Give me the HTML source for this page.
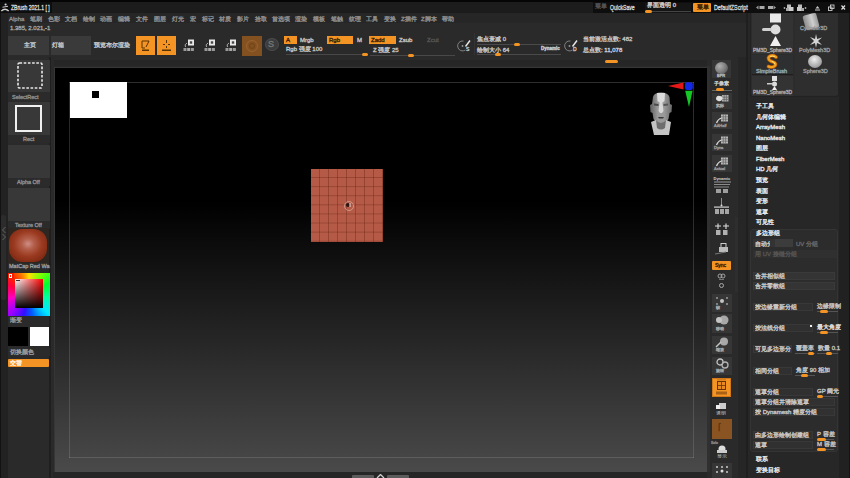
<!DOCTYPE html>
<html><head><meta charset="utf-8">
<style>
*{margin:0;padding:0;box-sizing:border-box}
html,body{width:850px;height:478px;overflow:hidden;background:#2a2a2a;font-family:"Liberation Sans",sans-serif;color:#c8c8c8}
.a{position:absolute}
svg{display:block}
.t{position:absolute;font-size:6px;line-height:7px;white-space:nowrap;color:#c4c4c4;-webkit-text-stroke:0.35px currentColor}
.btn{position:absolute;background:#3a3a3a}
.or{position:absolute;background:#f39424;color:#3a2000}
.sl{position:absolute;height:1px;background:#5a5a5a}
.hd{position:absolute;width:6px;height:3px;border-radius:1.5px;background:#f39424}
#title{left:0;top:0;width:850px;height:13px;background:#0e0e0e}
#vp{left:55px;top:68px;width:652px;height:404px;background:linear-gradient(#000 0%,#000 33%,#4a4a4a 100%)}
.fr{position:absolute;background:rgba(255,255,255,0.13)}
</style></head><body>
<!-- title bar -->
<div class="a" style="left:0;top:13px;width:850px;height:10px;background:#262626"></div>
<div class="a" id="title"></div>
<div class="a" style="left:52px;top:2px;width:541px;height:11px;background:#1c1c1c"></div>
<div class="a" style="left:0;top:0;width:850px;height:2px;background:#050505"></div>

<!-- title text -->
<svg class="a" style="left:0;top:0" width="11" height="13" viewBox="0 0 11 13"><ellipse cx="5.6" cy="4.6" rx="1.1" ry="1" fill="#cfcfcf"/><path d="M2.5 7.2 L8 6.2" stroke="#c8c8c8" stroke-width="1.1"/><path d="M1.3 11 Q5 7.5 8.7 11" stroke="#d0d0d0" stroke-width="1.3" fill="none"/></svg>
<div class="t" style="left:11px;top:3.5px;color:#dadada;font-size:7px;transform:scaleX(.72);transform-origin:0 0">ZBrush 2021.1 [ ]</div>
<div class="t" style="left:595px;top:3px;color:#555">菜单</div>
<div class="t" style="left:610px;top:4px;color:#d4d4d4;font-size:7px;transform:scaleX(.73);transform-origin:0 0">QuickSave</div>
<div class="a" style="left:645px;top:3px;width:46px;height:10px;background:#151515"></div>
<div class="t" style="left:647px;top:2px;color:#c8c8c8">界面透明 0</div>
<div class="sl" style="left:645px;top:11px;width:46px;background:#444"></div>
<div class="hd" style="left:645px;top:10px;width:7px"></div>
<div class="or" style="left:693px;top:3px;width:18px;height:9px;border-radius:1px"></div>
<div class="t" style="left:697px;top:4px;color:#3a2000">菜单</div>
<div class="t" style="left:714px;top:4px;color:#d4d4d4;font-size:7px;transform:scaleX(.76);transform-origin:0 0">DefaultZScript</div>
<svg class="a" style="left:750px;top:2px" width="100" height="11" viewBox="0 0 100 11">
<path d="M6 5.5 L8.5 3.5 L8.5 7.5 Z" fill="#999"/><rect x="9.5" y="4" width="5" height="3" fill="#aaa"/>
<rect x="18" y="4" width="5" height="3" fill="#aaa"/><path d="M26 5.5 L23.5 3.5 L23.5 7.5 Z" fill="#999"/>
<circle cx="34.5" cy="6" r="0.9" fill="#aaa"/><rect x="37" y="2.5" width="4" height="3.5" fill="#bbb"/><rect x="39" y="5" width="4.5" height="4" fill="#ccc"/><rect x="36" y="6" width="3" height="3" fill="#aaa"/>
<rect x="48" y="2.5" width="4" height="3.5" fill="#bbb"/><rect x="47" y="5" width="4.5" height="4" fill="#ccc"/><rect x="51" y="6" width="3" height="3" fill="#aaa"/><circle cx="55.5" cy="6" r="0.9" fill="#aaa"/>
<path d="M67.5 4 L69.5 6.5 L65.5 6.5 Z" fill="#ccc"/><rect x="65" y="7.5" width="5" height="1" fill="#ccc"/>
<rect x="78.5" y="5" width="3.5" height="3.5" fill="none" stroke="#ccc" stroke-width="0.9"/><rect x="80.5" y="3" width="3.5" height="3.5" fill="none" stroke="#ccc" stroke-width="0.9"/>
<path d="M91.5 3.5 L95 7.5 M95 3.5 L91.5 7.5" stroke="#ddd" stroke-width="1.2"/>
</svg>
<!-- menu bar -->
<div class="t" style="left:9px;top:15.5px;color:#8e8e8e">Alpha</div>
<div class="t" style="left:30px;top:15.5px;color:#8e8e8e">笔刷</div>
<div class="t" style="left:48px;top:15.5px;color:#8e8e8e">色彩</div>
<div class="t" style="left:65px;top:15.5px;color:#8e8e8e">文档</div>
<div class="t" style="left:83px;top:15.5px;color:#8e8e8e">绘制</div>
<div class="t" style="left:100px;top:15.5px;color:#8e8e8e">动画</div>
<div class="t" style="left:118px;top:15.5px;color:#8e8e8e">编辑</div>
<div class="t" style="left:136px;top:15.5px;color:#8e8e8e">文件</div>
<div class="t" style="left:154px;top:15.5px;color:#8e8e8e">图层</div>
<div class="t" style="left:172px;top:15.5px;color:#8e8e8e">灯光</div>
<div class="t" style="left:190px;top:15.5px;color:#8e8e8e">宏</div>
<div class="t" style="left:202px;top:15.5px;color:#8e8e8e">标记</div>
<div class="t" style="left:219px;top:15.5px;color:#8e8e8e">材质</div>
<div class="t" style="left:237px;top:15.5px;color:#8e8e8e">影片</div>
<div class="t" style="left:255px;top:15.5px;color:#8e8e8e">拾取</div>
<div class="t" style="left:272px;top:15.5px;color:#8e8e8e">首选项</div>
<div class="t" style="left:295px;top:15.5px;color:#8e8e8e">渲染</div>
<div class="t" style="left:313px;top:15.5px;color:#8e8e8e">模板</div>
<div class="t" style="left:331px;top:15.5px;color:#8e8e8e">笔触</div>
<div class="t" style="left:349px;top:15.5px;color:#8e8e8e">纹理</div>
<div class="t" style="left:366px;top:15.5px;color:#8e8e8e">工具</div>
<div class="t" style="left:384px;top:15.5px;color:#8e8e8e">变换</div>
<div class="t" style="left:401px;top:15.5px;color:#8e8e8e">Z插件</div>
<div class="t" style="left:421px;top:15.5px;color:#8e8e8e">Z脚本</div>
<div class="t" style="left:442px;top:15.5px;color:#8e8e8e">帮助</div>
<div class="t" style="left:10px;top:25px;color:#a4a4a4">1.385, 2.021,-1</div>

<!-- toolbar -->
<div class="btn" style="left:8px;top:36px;width:41px;height:19px"></div>
<div class="t" style="left:24px;top:42px">主页</div>
<div class="btn" style="left:51px;top:36px;width:40px;height:19px"></div>
<div class="t" style="left:52px;top:42px">灯箱</div>
<div class="t" style="left:94px;top:42px">预览布尔渲染</div>
<div class="or" style="left:136px;top:36px;width:19px;height:19px"></div>
<div class="or" style="left:157px;top:36px;width:19px;height:19px"></div>
<div class="a" style="left:137px;top:37px"><svg width="17" height="17" viewBox="0 0 17 17"><path d="M5 4 L12 4 M5 4 L5 11 L8 11 M12 4 L9 10" stroke="#5a3300" stroke-width="1" fill="none"/><rect x="5" y="12.5" width="7" height="1.5" fill="#5a3300"/></svg></div>
<div class="a" style="left:158px;top:37px"><svg width="17" height="17" viewBox="0 0 17 17"><path d="M8.5 3 L8.5 6 M8.5 9 L8.5 11 M5 7.5 L7 7.5 M10 7.5 L12 7.5" stroke="#5a3300" stroke-width="1" fill="none"/><rect x="4" y="12.5" width="9" height="1.5" fill="#5a3300"/></svg></div>
<div class="a" style="left:182px;top:38px"><svg width="14" height="14" viewBox="0 0 14 14"><rect x="6" y="1.5" width="6" height="6" fill="#e8e8e8"/><rect x="7.8" y="3.3" width="2.4" height="2.4" fill="#444"/><path d="M5 5 Q2 6.5 3.5 9" stroke="#aaa" stroke-width="1" fill="none"/><rect x="1.5" y="10" width="3" height="3" fill="#999"/><rect x="5.2" y="10" width="3" height="3" fill="#aaa"/><rect x="8.9" y="10" width="3" height="3" fill="#999"/></svg></div>
<div class="a" style="left:203px;top:38px"><svg width="14" height="14" viewBox="0 0 14 14"><rect x="6" y="1.5" width="6" height="6" fill="#e8e8e8"/><rect x="7.8" y="3.3" width="2.4" height="2.4" fill="#444"/><path d="M5 5 Q2 6.5 3.5 9" stroke="#aaa" stroke-width="1" fill="none"/><rect x="1.5" y="10" width="3" height="3" fill="#999"/><rect x="5.2" y="10" width="3" height="3" fill="#aaa"/><rect x="8.9" y="10" width="3" height="3" fill="#999"/></svg></div>
<div class="a" style="left:224px;top:38px"><svg width="14" height="14" viewBox="0 0 14 14"><rect x="6" y="1.5" width="6" height="6" fill="#e8e8e8"/><rect x="7.8" y="3.3" width="2.4" height="2.4" fill="#444"/><path d="M5 5 Q2 6.5 3.5 9" stroke="#aaa" stroke-width="1" fill="none"/><rect x="1.5" y="10" width="3" height="3" fill="#999"/><rect x="5.2" y="10" width="3" height="3" fill="#aaa"/><rect x="8.9" y="10" width="3" height="3" fill="#999"/></svg></div>
<div class="a" style="left:242px;top:36px;width:20px;height:20px;background:#83511f"></div>
<div class="a" style="left:246px;top:40px;width:12px;height:12px;border-radius:50%;border:1.5px solid #9a6430"></div><div class="a" style="left:249px;top:43px;width:6px;height:6px;border-radius:50%;border:1px solid #72441a"></div>
<div class="a" style="left:265px;top:38px;width:14px;height:13px;border-radius:50%;background:#3c3c3c;border:1px solid #4c4c4c"></div>
<div class="t" style="left:268px;top:40px;color:#777;font-size:9px;line-height:9px">S</div>
<div class="or" style="left:284px;top:36px;width:13px;height:8px"></div>
<div class="t" style="left:286px;top:37px;color:#3a2000">A</div>
<div class="t" style="left:300px;top:37px">Mrgb</div>
<div class="or" style="left:327px;top:36px;width:26px;height:8px"></div>
<div class="t" style="left:329px;top:37px;color:#3a2000">Rgb</div>
<div class="t" style="left:357px;top:37px">M</div>
<div class="or" style="left:369px;top:36px;width:27px;height:8px"></div>
<div class="t" style="left:371px;top:37px;color:#3a2000">Zadd</div>
<div class="t" style="left:399px;top:37px">Zsub</div>
<div class="t" style="left:427px;top:37px;color:#555">Zcut</div>
<div class="t" style="left:286px;top:46px">Rgb 强度 100</div>
<div class="sl" style="left:286px;top:54px;width:82px;background:#484848"></div>
<div class="hd" style="left:362px;top:53px"></div>
<div class="t" style="left:373px;top:47px">Z 强度 25</div>
<div class="sl" style="left:370px;top:55px;width:85px;background:#484848"></div>
<div class="hd" style="left:408px;top:54px"></div>
<!-- brush icons -->
<div class="a" style="left:456px;top:38px"><svg width="16" height="15" viewBox="0 0 16 15"><path d="M7.5 3 A5 5 0 1 0 9.5 12" stroke="#888" stroke-width="0.9" fill="none"/><path d="M9.5 8.5 L14 2.5" stroke="#e8e8e8" stroke-width="1.4"/><circle cx="6.5" cy="8" r="0.9" fill="#999"/></svg></div>
<div class="t" style="left:466px;top:46px;font-size:5px">S</div>
<div class="t" style="left:477px;top:36px">焦点衰减 0</div>
<div class="sl" style="left:477px;top:44px;width:84px;background:#4a4a4a"></div>
<div class="hd" style="left:514px;top:43px"></div>
<div class="t" style="left:477px;top:47px">绘制大小 64</div>
<div class="sl" style="left:477px;top:54px;width:84px;background:#4a4a4a"></div><div class="a" style="left:474px;top:33px;width:1px;height:22px;background:#333"></div>
<div class="hd" style="left:495px;top:53px"></div>
<div class="t" style="left:541px;top:45px;font-size:4.5px;color:#ccc;font-weight:bold">Dynamic</div>
<div class="a" style="left:563px;top:38px"><svg width="16" height="15" viewBox="0 0 16 15"><path d="M7.5 3 A5 5 0 1 0 9.5 12" stroke="#888" stroke-width="0.9" fill="none"/><path d="M9.5 8.5 L14 2.5" stroke="#e8e8e8" stroke-width="1.4"/><circle cx="6.5" cy="8" r="0.9" fill="#999"/></svg></div>
<div class="t" style="left:573px;top:46px;font-size:5px">D</div>
<div class="t" style="left:583px;top:36px">当前激活点数: 482</div>
<div class="t" style="left:583px;top:47px">总点数: <span style="color:#c8d0e0">11,078</span></div>
<!-- left dark strip --><!--LP-->
<div class="a" style="left:0;top:13px;width:8px;height:465px;background:#222"></div><div class="a" style="left:0;top:13px;width:1px;height:465px;background:#121212"></div>
<!-- toolbar bottom darker band -->
<div class="a" style="left:50px;top:60px;width:700px;height:6px;background:#262626"></div>
<div class="a" style="left:50px;top:57px;width:4px;height:421px;background:#2a2a2a"></div><div class="a" style="left:49px;top:57px;width:2px;height:421px;background:#1f1f1f"></div>

<!-- left panel -->
<div class="btn" style="left:8px;top:60px;width:42px;height:41px;background:#383838"></div>
<div class="a" style="left:8px;top:92px;width:42px;height:9px;background:#2b2b2b"></div>
<svg class="a" style="left:17px;top:62px" width="26" height="27" viewBox="0 0 26 27"><rect x="1" y="1" width="24" height="25" rx="1.5" fill="none" stroke="#e8e8e8" stroke-width="1.6" stroke-dasharray="2.6 1.6"/></svg>
<div class="t" style="left:12px;top:94px;font-size:5.5px;color:#8e8e8e">SelectRect</div>
<div class="btn" style="left:8px;top:102px;width:42px;height:41px;background:#383838"></div>
<div class="a" style="left:8px;top:135px;width:42px;height:8px;background:#2b2b2b"></div>
<div class="a" style="left:15px;top:105px;width:27px;height:27px;border:2px solid #f0f0f0"></div>
<div class="t" style="left:23px;top:136px;font-size:5.5px;color:#8e8e8e">Rect</div>
<div class="btn" style="left:8px;top:145px;width:42px;height:41px;background:#383838"></div>
<div class="a" style="left:8px;top:178px;width:42px;height:8px;background:#2b2b2b"></div>
<div class="t" style="left:17px;top:179px;font-size:5.5px;color:#8e8e8e">Alpha Off</div>
<div class="btn" style="left:8px;top:188px;width:42px;height:41px;background:#383838"></div>
<div class="a" style="left:8px;top:221px;width:42px;height:8px;background:#2b2b2b"></div>
<div class="t" style="left:15px;top:222px;font-size:5.5px;color:#8e8e8e">Texture Off</div>
<div class="a" style="left:8px;top:228px;width:41px;height:35px;background:#2e2620"></div>
<div class="a" style="left:9px;top:229px;width:38px;height:33px;border-radius:36%/40%;background:radial-gradient(ellipse 62% 64% at 50% 45%,#d08e86 0%,#b4604c 25%,#9a3a20 60%,#7c2610 100%)"></div>
<div class="t" style="left:9px;top:263px;font-size:5.5px;color:#9a9a9a">MatCap Red Wa</div>
<div class="a" style="left:8px;top:273px;width:42px;height:43px;background:conic-gradient(from 0deg at 50% 50%,#ffe000 0deg,#80ff00 30deg,#00ff30 60deg,#00ffa0 100deg,#00e8ff 135deg,#0060ff 170deg,#3010ff 195deg,#a000ff 225deg,#ff00c0 260deg,#ff0040 295deg,#ff2000 315deg,#ff8000 340deg,#ffe000 360deg)"></div>
<div class="a" style="left:15px;top:279px;width:28px;height:29px;background:linear-gradient(to bottom,rgba(0,0,0,0) 0%,#000 100%),linear-gradient(to right,#fff 0%,#ff0000 100%)"></div>
<div class="a" style="left:8px;top:273px;width:6px;height:6px;background:#ff1a00"></div>
<div class="a" style="left:9px;top:274px;width:3px;height:4px;border:1px solid #fff"></div>
<div class="a" style="left:16px;top:280px;width:4px;height:1px;background:#333"></div>
<div class="t" style="left:10px;top:317px;font-size:5.5px;color:#9a9a9a">渐变</div>
<div class="a" style="left:8px;top:327px;width:20px;height:19px;background:#000"></div>
<div class="a" style="left:30px;top:327px;width:19px;height:19px;background:#fff"></div>
<div class="a" style="left:8px;top:348px;width:42px;height:8px;background:#2b2b2b"></div>
<div class="t" style="left:10px;top:349px;font-size:5.5px;color:#9a9a9a">切换颜色</div>
<div class="or" style="left:8px;top:359px;width:41px;height:8px;border-radius:1px"></div>
<div class="t" style="left:10px;top:360px;font-size:5.5px;color:#fff0e0">交替</div>
<div class="a" style="left:1px;top:215px;width:5px;height:85px;background:#2c2c2c;border-radius:2px"></div>
<svg class="a" style="left:1px;top:226px" width="6" height="14" viewBox="0 0 6 14"><path d="M4.5 1 L1.5 4 L4.5 7 M1.5 8 L4.5 11 L1.5 14" stroke="#6a6a6a" stroke-width="0.9" fill="none"/></svg>
<!-- viewport -->
<div class="a" style="left:54px;top:67px;width:653px;height:405px;background:#363636"></div>
<div class="a" id="vp"></div>
<div class="a" style="left:69px;top:82px;width:625px;height:1px;background:rgba(255,255,255,0.18)"></div>
<div class="a" style="left:69px;top:82px;width:1px;height:376px;background:linear-gradient(rgba(255,255,255,0.16),rgba(255,255,255,0.12))"></div>
<div class="a" style="left:693px;top:82px;width:1px;height:376px;background:linear-gradient(rgba(255,255,255,0.18),rgba(255,255,255,0.12))"></div>
<div class="fr" style="left:69px;top:457px;width:625px;height:1px"></div>
<div class="a" style="left:53px;top:472px;width:654px;height:6px;background:#262626"></div>

<!-- right toolbar -->
<div class="a" style="left:707px;top:57px;width:39px;height:421px;background:#2a2a2a"></div>
<div class="a" style="left:707px;top:66px;width:3px;height:406px;background:#303030"></div>
<div class="a" style="left:738px;top:57px;width:8px;height:421px;background:#262626"></div>
<div class="a" style="left:735px;top:217px;width:3px;height:75px;background:#2e2e2e"></div>
<div class="a" style="left:712px;top:60px;width:19px;height:18px;background:#363636"><div class="a" style="left:3px;top:2px;width:13px;height:12px;border-radius:50%;background:radial-gradient(circle at 35% 35%,#b0b0b0,#7a7a7a 55%,#3c3c3c)"></div><div class="t" style="left:5px;top:13px;font-size:4px;line-height:5px;color:#bbb">BPR</div></div>
<div class="t" style="left:714px;top:80px;font-size:5px;color:#ccc">子像素</div>
<div class="sl" style="left:712px;top:90px;width:20px;background:#666"></div>
<div class="hd" style="left:716px;top:88px;width:8px"></div>
<div class="a" style="left:712px;top:93px;width:20px;height:16px;background:#363636"><svg class="a" style="left:3px;top:1px" width="14" height="9" viewBox="0 0 14 9"><rect x="7" y="1" width="6.5" height="6.5" fill="#b0b0b0"/><path d="M9.2 1 V7.5 M11.4 1 V7.5 M7 3.2 H13.5 M7 5.4 H13.5" stroke="#555" stroke-width="0.6"/><path d="M1 4 Q2 1 5 2 Q8 2 7.5 5 Q6 8 3 7 Q0.5 6 1 4Z" fill="#e0e0e0"/></svg><div class="t" style="left:4px;top:10px;font-size:4px;line-height:5px;color:#aaa">实际</div></div>
<div class="a" style="left:712px;top:112px;width:20px;height:17px;background:#363636"><svg class="a" style="left:3px;top:2px" width="14" height="10" viewBox="0 0 14 10"><rect x="6" y="0.5" width="7" height="7" fill="#b8b8b8"/><path d="M8.3 0.5 V7.5 M10.6 0.5 V7.5 M6 2.8 H13 M6 5.2 H13" stroke="#5a5a5a" stroke-width="0.6"/><path d="M1.5 9 Q3 5 6.5 4" stroke="#d8d8d8" stroke-width="1.3" fill="none"/></svg><div class="t" style="left:2px;top:11px;font-size:4px;line-height:5px;color:#9a9a9a">AAHalf</div></div>
<div class="a" style="left:712px;top:134px;width:20px;height:17px;background:#363636"><svg class="a" style="left:3px;top:2px" width="14" height="10" viewBox="0 0 14 10"><rect x="6" y="0.5" width="7" height="7" fill="#b8b8b8"/><path d="M8.3 0.5 V7.5 M10.6 0.5 V7.5 M6 2.8 H13 M6 5.2 H13" stroke="#5a5a5a" stroke-width="0.6"/><path d="M1.5 9 Q3 5 6.5 4" stroke="#d8d8d8" stroke-width="1.3" fill="none"/></svg><div class="t" style="left:2px;top:11px;font-size:4px;line-height:5px;color:#9a9a9a">Dyna</div></div>
<div class="a" style="left:712px;top:155px;width:20px;height:17px;background:#363636"><svg class="a" style="left:3px;top:2px" width="14" height="10" viewBox="0 0 14 10"><rect x="6" y="0.5" width="7" height="7" fill="#b8b8b8"/><path d="M8.3 0.5 V7.5 M10.6 0.5 V7.5 M6 2.8 H13 M6 5.2 H13" stroke="#5a5a5a" stroke-width="0.6"/><path d="M1.5 9 Q3 5 6.5 4" stroke="#d8d8d8" stroke-width="1.3" fill="none"/></svg><div class="t" style="left:2px;top:11px;font-size:4px;line-height:5px;color:#9a9a9a">Actual</div></div>
<svg class="a" style="left:713px;top:176px" width="20" height="18" viewBox="0 0 20 18"><text x="0.5" y="4" font-size="4" font-weight="bold" fill="#d8d8d8" font-family="Liberation Sans">Dynamic</text><rect x="1" y="5.5" width="17" height="1" fill="#9a9a9a"/><rect x="1" y="8" width="16" height="1" fill="#8a8a8a"/><rect x="1" y="10.5" width="15" height="1" fill="#8a8a8a"/><rect x="3" y="13" width="5" height="4" fill="#bbb" opacity="0.8"/><rect x="10" y="13" width="5" height="4" fill="#bbb" opacity="0.8"/></svg>
<svg class="a" style="left:713px;top:196px" width="18" height="19" viewBox="0 0 18 19"><path d="M8.5 2 L8.5 10" stroke="#aaa" stroke-width="0.8"/><circle cx="8.5" cy="9.5" r="1" fill="#ddd"/><rect x="1" y="10.5" width="15" height="1.2" fill="#d0d0d0"/><rect x="2" y="13" width="4" height="5" fill="#bbb" opacity="0.85"/><rect x="7" y="13" width="4" height="5" fill="#bbb" opacity="0.85"/><rect x="12" y="13" width="4" height="5" fill="#bbb" opacity="0.85"/></svg>
<svg class="a" style="left:713px;top:223px" width="18" height="13" viewBox="0 0 18 13"><path d="M2 3 L8 3 M5 0.5 L5 6 M10 3 L16 3 M13 0.5 L13 6" stroke="#ddd" stroke-width="1.1"/><rect x="3" y="7" width="4.5" height="5" fill="#c8c8c8" opacity="0.85"/><rect x="10" y="7" width="4.5" height="5" fill="#c8c8c8" opacity="0.85"/></svg>
<div class="a" style="left:714px;top:243px"><svg width="16" height="12" viewBox="0 0 16 12"><rect x="7" y="0.5" width="5" height="4" fill="none" stroke="#ccc"/><rect x="5" y="4" width="9" height="5" fill="#bbb"/><path d="M1 11 L12 9" stroke="#777"/></svg></div>
<div class="or" style="left:712px;top:261px;width:19px;height:9px;border-radius:1px"></div><div class="t" style="left:715px;top:262px;font-size:5px;color:#3a2000">Sync</div>
<svg class="a" style="left:717px;top:273px" width="9" height="7" viewBox="0 0 9 7"><circle cx="3" cy="3" r="2" fill="none" stroke="#aaa" stroke-width="0.9"/><circle cx="6" cy="3" r="2" fill="none" stroke="#aaa" stroke-width="0.9"/><path d="M2 6.5 L7 6.5" stroke="#888" stroke-width="0.8"/></svg>
<div class="a" style="left:719px;top:283px;width:5px;height:5px;border-radius:50%;border:1px solid #aaa"></div>
<div class="a" style="left:712px;top:294px;width:20px;height:18px;background:#363636"><svg class="a" style="left:3px;top:2px" width="14" height="10" viewBox="0 0 14 10"><circle cx="7" cy="5" r="2" fill="#c4c4c4"/><circle cx="2" cy="2" r="1" fill="#9a9a9a"/><circle cx="12" cy="2" r="1" fill="#9a9a9a"/><circle cx="2" cy="8" r="1" fill="#9a9a9a"/><circle cx="12" cy="8" r="1" fill="#9a9a9a"/></svg><div class="t" style="left:4px;top:11px;font-size:4px;line-height:5px;color:#a8a8a8">帧</div></div>
<div class="a" style="left:712px;top:314px;width:20px;height:19px;background:#363636"><svg class="a" style="left:3px;top:1px" width="14" height="11" viewBox="0 0 14 11"><circle cx="9" cy="5" r="4.5" fill="#a8a8a8"/><circle cx="4" cy="5" r="3" fill="#c4c4c4"/></svg><div class="t" style="left:4px;top:12px;font-size:4px;line-height:5px;color:#a8a8a8">移动</div></div>
<div class="a" style="left:712px;top:336px;width:20px;height:18px;background:#363636"><svg class="a" style="left:3px;top:1px" width="14" height="11" viewBox="0 0 14 11"><circle cx="9" cy="4.5" r="4" fill="#a8a8a8"/><path d="M1 10 L6 5" stroke="#c4c4c4" stroke-width="1.5"/></svg><div class="t" style="left:4px;top:11px;font-size:4px;line-height:5px;color:#a8a8a8">缩放</div></div>
<div class="a" style="left:712px;top:357px;width:20px;height:18px;background:#363636"><svg class="a" style="left:3px;top:1px" width="14" height="11" viewBox="0 0 14 11"><circle cx="5" cy="4" r="3" fill="none" stroke="#c4c4c4" stroke-width="1.3"/><circle cx="10" cy="7" r="3" fill="none" stroke="#b4b4b4" stroke-width="1.3"/></svg><div class="t" style="left:4px;top:11px;font-size:4px;line-height:5px;color:#a8a8a8">旋转</div></div>
<div class="or" style="left:712px;top:378px;width:19px;height:19px;box-shadow:inset 0 0 0 1px #d07818"></div><svg class="a" style="left:712px;top:378px" width="19" height="19" viewBox="0 0 19 19"><rect x="5.5" y="3.5" width="8" height="8" fill="#e88a20" stroke="#6a3400" stroke-width="1"/><path d="M9.5 3.5 V11.5 M5.5 7.5 H13.5" stroke="#6a3400" stroke-width="0.8"/><rect x="4" y="13.5" width="11" height="3" fill="#8a4a10" opacity="0.7"/><rect x="5" y="1" width="9" height="1.5" fill="#c06a18" opacity="0.6"/></svg>
<div class="a" style="left:714px;top:402px"><svg width="16" height="13" viewBox="0 0 16 13"><rect x="5" y="1" width="7" height="6" fill="#ccc"/><rect x="2" y="3" width="4" height="4" fill="#eee"/><text x="2" y="12.5" font-size="4.5" fill="#ccc" font-family="Liberation Sans">透明</text></svg></div>
<div class="a" style="left:712px;top:419px;width:20px;height:20px;background:#8a5422"></div><div class="t" style="left:718px;top:423px;font-size:10px;line-height:10px;color:#5e3410">ſ</div>
<div class="t" style="left:711px;top:440px;font-size:3.5px;color:#888">Solo</div>
<div class="a" style="left:714px;top:445px"><svg width="16" height="13" viewBox="0 0 16 13"><circle cx="8" cy="4" r="3.5" fill="#ddd"/><rect x="3" y="5" width="10" height="3" fill="#ccc"/><text x="3" y="12.5" font-size="4.5" fill="#ccc" font-family="Liberation Sans">显示</text></svg></div>
<div class="a" style="left:712px;top:463px;width:20px;height:15px;background:#363636"><svg class="a" style="left:3px;top:2px" width="14" height="12" viewBox="0 0 14 12"><circle cx="2" cy="2" r="1" fill="#ccc"/><circle cx="7" cy="2" r="1" fill="#ccc"/><circle cx="12" cy="2" r="1" fill="#ccc"/><circle cx="2" cy="7" r="1" fill="#ccc"/><circle cx="7" cy="6" r="1.5" fill="#ddd"/><circle cx="12" cy="7" r="1" fill="#ccc"/></svg></div>
<!-- right panel -->
<div class="a" style="left:746px;top:13px;width:2px;height:465px;background:#1f1f1f"></div>
<div class="a" style="left:748px;top:13px;width:91px;height:465px;background:#272727"></div>
<div class="a" style="left:839px;top:13px;width:10px;height:465px;background:#212121"></div>
<div class="a" style="left:849px;top:13px;width:1px;height:465px;background:#141414"></div>
<div class="a" style="left:750px;top:13px;width:89px;height:84px;background:#2c2c2c;border:1px solid #222;border-top:none;border-radius:0 0 3px 3px"></div>
<div class="a" style="left:752px;top:13px;width:41px;height:41px;background:#333"></div>
<div class="a" style="left:752px;top:55px;width:41px;height:20px;background:#2e2f31;border-bottom:1px solid #1e1e1e"></div>
<div class="a" style="left:752px;top:76px;width:41px;height:20px;background:#333"></div>
<div class="a" style="left:795px;top:13px;width:43px;height:82px;background:#2e2e2e"></div>
<div class="a" style="left:757px;top:13px"><svg width="32" height="36" viewBox="0 0 32 36">
<rect x="13" y="0.5" width="11" height="9" fill="#e8e8e8"/>
<circle cx="18.5" cy="16.5" r="5" fill="#dcdcdc"/>
<rect x="5" y="15" width="10" height="3" rx="1.5" fill="#d0d0d0"/>
<path d="M18.5 23 L24 33 L13 33 Z" fill="#f0f0f0"/>
</svg></div>
<div class="t" style="left:753px;top:47px;font-size:5px;color:#aaa">PM3D_Sphere3D</div>
<div class="a" style="left:804px;top:14px;width:14px;height:15px;background:linear-gradient(to right,#8a8a8a,#cfcfcf 60%,#999);transform:rotate(-15deg);border-radius:3px/2px"></div>
<div class="t" style="left:800px;top:25px;font-size:5.5px;color:#999">Cylinder3D</div>
<div class="a" style="left:809px;top:34px"><svg width="14" height="14" viewBox="0 0 14 14"><path d="M7 0 L8.2 5 L13 3.5 L9 7 L13 11 L8 9 L7 14 L6 9 L1 11 L5 7 L1 3 L6 5 Z" fill="#d4d4d4"/></svg></div>
<div class="t" style="left:799px;top:47px;font-size:5.5px;color:#999">PolyMesh3D</div>
<div class="a" style="left:764px;top:54px"><svg width="16" height="15" viewBox="0 0 16 15"><path d="M12 3.2 Q9.5 0.8 6.5 1.8 Q3.5 3 5 5.8 Q6.5 7.5 9.5 8.2 Q12.5 9.2 11 11.8 Q9 14 4.5 12.5" stroke="#a04a08" stroke-width="3.8" fill="none" stroke-linecap="round"/><path d="M12 3.2 Q9.5 0.8 6.5 1.8 Q3.5 3 5 5.8 Q6.5 7.5 9.5 8.2 Q12.5 9.2 11 11.8 Q9 14 4.5 12.5" stroke="#f0a020" stroke-width="2.4" fill="none" stroke-linecap="round"/><path d="M10.5 2.5 Q8 1.5 6.5 2.5 M8 7.2 Q10.5 8 10.8 10" stroke="#ffe070" stroke-width="1" fill="none" stroke-linecap="round"/></svg></div>
<div class="t" style="left:756px;top:68px;font-size:5.5px;color:#9aa">SimpleBrush</div>
<div class="a" style="left:808px;top:55px;width:14px;height:13px;border-radius:50%;background:radial-gradient(circle at 45% 35%,#eee,#aaa 60%,#777)"></div>
<div class="t" style="left:803px;top:68px;font-size:5.5px;color:#999">Sphere3D</div>
<div class="a" style="left:765px;top:76px"><svg width="16" height="16" viewBox="0 0 16 16"><rect x="7" y="0" width="5" height="5" fill="#e0e0e0"/><circle cx="9.5" cy="8" r="2.5" fill="#ddd"/><rect x="2" y="7" width="6" height="1.5" fill="#ccc"/><path d="M9.5 10 L12 14 L7 14 Z" fill="#eee"/></svg></div>
<div class="t" style="left:753px;top:89px;font-size:5px;color:#aaa">PM3D_Sphere3D</div>
<div class="a" style="left:750px;top:229px;width:88px;height:223px;background:#2c2c2c;border:1px solid #343434;border-radius:3px"></div>
<div class="t" style="left:756px;top:103.0px;font-size:6px;color:#e8e8e8">子工具</div>
<div class="t" style="left:756px;top:113.5px;font-size:6px;color:#e8e8e8">几何体编辑</div>
<div class="t" style="left:756px;top:124.0px;font-size:6px;color:#e8e8e8">ArrayMesh</div>
<div class="t" style="left:756px;top:134.5px;font-size:6px;color:#e8e8e8">NanoMesh</div>
<div class="t" style="left:756px;top:145.0px;font-size:6px;color:#e8e8e8">图层</div>
<div class="t" style="left:756px;top:155.5px;font-size:6px;color:#e8e8e8">FiberMesh</div>
<div class="t" style="left:756px;top:166.0px;font-size:6px;color:#e8e8e8">HD 几何</div>
<div class="t" style="left:756px;top:177.0px;font-size:6px;color:#e8e8e8">预览</div>
<div class="t" style="left:756px;top:187.5px;font-size:6px;color:#e8e8e8">表面</div>
<div class="t" style="left:756px;top:198.0px;font-size:6px;color:#e8e8e8">变形</div>
<div class="t" style="left:756px;top:208.5px;font-size:6px;color:#e8e8e8">遮罩</div>
<div class="t" style="left:756px;top:219.0px;font-size:6px;color:#e8e8e8">可见性</div>
<div class="t" style="left:756px;top:229.5px;font-size:6px;color:#e8e8e8">多边形组</div>
<div class="a" style="left:753px;top:239px;width:40px;height:8px;background:#333"></div><div class="a" style="left:775px;top:239px;width:18px;height:8px;background:#3c3c3c"></div><div class="t" style="width:15px;overflow:hidden;left:755px;top:240.5px;color:#c8c8c8">自动分组</div>
<div class="t" style="left:796px;top:240.5px;color:#666">UV 分组</div>
<div class="a" style="left:753px;top:250px;width:84px;height:8px;background:#303030"></div><div class="t" style="width:81px;overflow:hidden;left:755px;top:250.5px;color:#555">用 UV 接缝分组</div>
<div class="a" style="left:753px;top:272px;width:82px;height:8px;background:#343434;box-shadow:inset 0 0 0 1px #3a3a3a"></div><div class="t" style="width:79px;overflow:hidden;left:755px;top:272.5px;color:#c8c8c8">合并相似组</div>
<div class="a" style="left:753px;top:282px;width:82px;height:8px;background:#343434;box-shadow:inset 0 0 0 1px #3a3a3a"></div><div class="t" style="width:79px;overflow:hidden;left:755px;top:282.5px;color:#c8c8c8">合并零散组</div>
<div class="a" style="left:753px;top:303px;width:60px;height:8px;background:#303030;box-shadow:inset 0 0 0 1px #383838"></div><div class="t" style="width:57px;overflow:hidden;left:755px;top:303.5px;color:#c8c8c8">按边缘重新分组</div>
<div class="t" style="left:817px;top:303px">边缘限制</div><div class="sl" style="left:817px;top:311px;width:21px;background:#555"></div><div class="hd" style="left:820px;top:310px;width:8px"></div>
<div class="a" style="left:753px;top:324px;width:60px;height:8px;background:#303030;box-shadow:inset 0 0 0 1px #383838"></div><div class="t" style="width:57px;overflow:hidden;left:755px;top:324.5px;color:#c8c8c8">按法线分组</div>
<div class="a" style="left:810px;top:325px;width:2px;height:2px;background:#eee"></div>
<div class="t" style="left:817px;top:324px;color:#ddd">最大角度</div><div class="sl" style="left:817px;top:332px;width:21px;background:#555"></div><div class="hd" style="left:820px;top:331px;width:8px"></div>
<div class="a" style="left:753px;top:345px;width:39px;height:8px;background:#303030;box-shadow:inset 0 0 0 1px #383838"></div><div class="t" style="width:36px;overflow:hidden;left:755px;top:345.5px;color:#c8c8c8">可见多边形分组</div>
<div class="t" style="left:796px;top:345px">覆盖率</div><div class="sl" style="left:795px;top:353px;width:20px;background:#555"></div><div class="hd" style="left:808px;top:352px;width:6px"></div>
<div class="t" style="left:818px;top:345px">数量 0.1</div><div class="sl" style="left:817px;top:353px;width:21px;background:#555"></div><div class="hd" style="left:826px;top:352px;width:6px"></div>
<div class="a" style="left:753px;top:367px;width:39px;height:8px;background:#303030;box-shadow:inset 0 0 0 1px #383838"></div><div class="t" style="width:36px;overflow:hidden;left:755px;top:367.5px;color:#c8c8c8">相同分组</div>
<div class="t" style="left:796px;top:367px">角度 90</div><div class="sl" style="left:795px;top:375px;width:20px;background:#555"></div><div class="hd" style="left:801px;top:374px;width:7px"></div>
<div class="t" style="left:818px;top:367px">相加</div>
<div class="a" style="left:753px;top:388px;width:60px;height:8px;background:#303030;box-shadow:inset 0 0 0 1px #383838"></div><div class="t" style="width:57px;overflow:hidden;left:755px;top:388.5px;color:#c8c8c8">遮罩分组</div>
<div class="t" style="left:817px;top:388px">GP 阈光</div><div class="sl" style="left:817px;top:396px;width:21px;background:#555"></div><div class="hd" style="left:817px;top:395px;width:6px"></div>
<div class="a" style="left:753px;top:398px;width:82px;height:8px;background:#313131;box-shadow:inset 0 0 0 1px #383838"></div><div class="t" style="width:79px;overflow:hidden;left:755px;top:398.5px;color:#c8c8c8">遮罩分组并清除遮罩</div>
<div class="a" style="left:753px;top:408px;width:82px;height:8px;background:#313131;box-shadow:inset 0 0 0 1px #383838"></div><div class="t" style="width:79px;overflow:hidden;left:755px;top:408.5px;color:#c8c8c8">按 Dynamesh 精度分组</div>
<div class="a" style="left:753px;top:431px;width:60px;height:8px;background:#303030;box-shadow:inset 0 0 0 1px #383838"></div><div class="t" style="width:57px;overflow:hidden;left:755px;top:431.5px;color:#c8c8c8">由多边形绘制创建组</div>
<div class="t" style="left:817px;top:431px">P 容差</div><div class="sl" style="left:817px;top:439px;width:17px;background:#555"></div><div class="hd" style="left:817px;top:438px;width:9px"></div>
<div class="a" style="left:753px;top:441px;width:60px;height:8px;background:#303030;box-shadow:inset 0 0 0 1px #383838"></div><div class="t" style="width:57px;overflow:hidden;left:755px;top:441.5px;color:#c8c8c8">遮罩</div>
<div class="t" style="left:817px;top:441px">M 容差</div><div class="sl" style="left:817px;top:449px;width:17px;background:#555"></div><div class="hd" style="left:817px;top:448px;width:9px"></div>
<div class="t" style="left:756px;top:455.5px;color:#e4e4e4">联系</div>
<div class="t" style="left:756px;top:467px;color:#e4e4e4">变换目标</div>
<!-- viewport objects -->
<div class="a" style="left:70px;top:82px;width:56.5px;height:36px;background:#fff"></div>
<div class="a" style="left:92px;top:91px;width:7px;height:7px;background:#000"></div>
<div class="a" style="left:311px;top:169px;width:72px;height:73px;background-color:#b45a46;background-image:linear-gradient(to right,rgba(90,25,10,0.32) 1px,transparent 1px),linear-gradient(to bottom,rgba(90,25,10,0.32) 1px,transparent 1px);background-size:9px 9.1px;background-position:-1px -1px"></div>
<div class="a" style="left:343.5px;top:200.5px;width:10px;height:10px;border-radius:50%;border:1.2px solid rgba(235,205,195,0.5)"></div>
<div class="a" style="left:345.5px;top:203px;width:4px;height:4px;border-radius:50%;background:#2a1510"></div><div class="a" style="left:349px;top:203px;width:2px;height:4px;background:rgba(235,210,200,0.55)"></div>
<!-- gizmo -->
<div class="a" style="left:667px;top:80px"><svg width="30" height="30" viewBox="0 0 30 30"><path d="M1 6 L16.5 2.5 L16.5 9.5 Z" fill="#e41818"/><rect x="18" y="2.3" width="7.8" height="7.8" rx="2" fill="#1428e8"/><path d="M18.2 10.8 L25.6 10.8 L22 27 Z" fill="#14c826"/></svg></div>
<!-- head -->
<div class="a" style="left:647px;top:91px"><svg width="28" height="46" viewBox="0 0 28 46">
<defs><linearGradient id="hg" x1="0" x2="1"><stop offset="0" stop-color="#5e5e5e"/><stop offset="0.35" stop-color="#9a9a9a"/><stop offset="0.65" stop-color="#9a9a9a"/><stop offset="1" stop-color="#6a6a6a"/></linearGradient></defs>
<path d="M6 6 Q7 1.5 14 1.5 Q21 1.5 22.5 6 L23 13 L25 14 L24.5 21 L22.5 22 L21.5 28 Q19 32 14 32 Q9 32 6.5 28 L5.5 22 L3.5 21 L3 14 L5 13 Z" fill="url(#hg)"/>
<path d="M10 2 L18 2 L17.5 10 L15 12 L13 12 L10.5 10 Z" fill="#dcdcdc"/>
<path d="M12.5 12 L15.5 12 L16.5 20 L15 22 L13 22 L11.5 20 Z" fill="#d8d8d8"/>
<path d="M7 12.5 L11.5 13 L11.5 15 L7 14.5 Z" fill="#4a4a4a"/>
<path d="M21 12.5 L16.5 13 L16.5 15 L21 14.5 Z" fill="#555"/>
<path d="M11 26 L17 26 L16 27.5 L12 27.5 Z" fill="#3a3a3a"/>
<path d="M4 31 L9 29 Q14 35 19 29 L24 31 L22 44 L7 44 Z" fill="#c4c4c4"/>
<path d="M9 29 Q14 35 19 29 L18 37 Q14 40 10 37 Z" fill="#6e6e6e"/>
</svg></div>
<div class="hd" style="left:605px;top:60px;width:13px"></div>
<div class="a" style="left:352px;top:475px;width:22px;height:3px;background:#5c5c5c;border-radius:1px 1px 0 0"></div>
<div class="a" style="left:387px;top:475px;width:22px;height:3px;background:#5c5c5c;border-radius:1px 1px 0 0"></div>
<svg class="a" style="left:376px;top:474px" width="9" height="4" viewBox="0 0 9 4"><path d="M1 4 L4.5 0.5 L8 4" stroke="#cfcfcf" stroke-width="1.3" fill="none"/></svg>
</body></html>
